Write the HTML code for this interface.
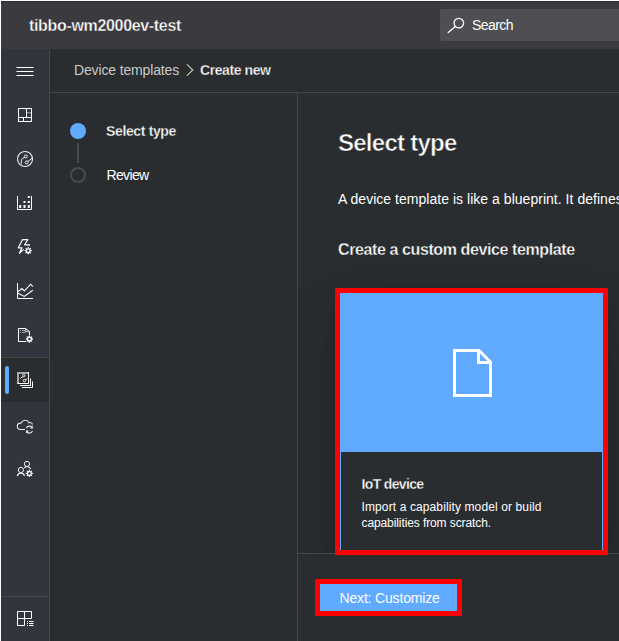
<!DOCTYPE html>
<html lang="en">
<head>
<meta charset="utf-8">
<title>Create new device template</title>
<style>
*{box-sizing:border-box;margin:0;padding:0}
html,body{width:619px;height:641px;overflow:hidden;background:#fff}
body{font-family:"Liberation Sans",sans-serif;color:#fff;position:relative}
.abs{position:absolute}
.t{position:absolute;white-space:nowrap}
#app{position:absolute;left:1px;top:1px;width:618px;height:640px;background:#2a2d30;overflow:hidden}
/* header */
#hdr{left:1px;top:1px;width:618px;height:48px;background:#3b3a3e;border-top:1px solid #2b2a2e}
#title{left:29px;top:16px;font-size:16px;line-height:20px;font-weight:bold;letter-spacing:-0.33px;-webkit-text-stroke:0.35px #3b3a3e}
#search{left:440px;top:9px;width:190px;height:32px;background:#4f4e53;border-radius:2px}
#searchtxt{left:472px;top:15px;font-size:14px;line-height:20px;letter-spacing:-0.56px}
/* sidebar */
#side{left:1px;top:49px;width:48px;height:592px;background:#31363e}
#sidesep{left:49px;top:49px;width:1px;height:592px;background:#474645}
.hl{position:absolute;left:1px;width:48px;height:1px;background:#484644}
#active{left:1px;top:358px;width:48px;height:44px;background:#2a2d30}
#pill{left:5px;top:366px;width:4px;height:28px;border-radius:2px;background:#60aaff}
svg{position:absolute;overflow:visible}
/* breadcrumb */
#crumbline{left:50px;top:92px;width:569px;height:1px;background:#474645}
#c1{left:74px;top:60px;font-size:14px;line-height:20px;color:#c9c9c9;letter-spacing:-0.149px}
#c2{left:200px;top:60px;font-size:14px;line-height:20px;font-weight:bold;letter-spacing:-0.42px;-webkit-text-stroke:0.3px #2a2d30}
/* steps */
#stepsep{left:297px;top:93px;width:1px;height:548px;background:#474645}
#dot1{left:70px;top:123px;width:16px;height:16px;border-radius:50%;background:#60aaff}
#conn{left:77px;top:143px;width:2px;height:20px;background:#4a4a4a}
#dot2{left:70px;top:167px;width:16px;height:16px;border-radius:50%;border:2px solid #4a4a4a}
#s1{left:106px;top:121px;font-size:14px;line-height:20px;font-weight:bold;letter-spacing:-0.358px;-webkit-text-stroke:0.3px #2a2d30}
#s2{left:106.5px;top:165px;font-size:14px;line-height:20px;letter-spacing:-0.651px}
/* main */
#h1{left:338px;top:127px;font-size:24px;line-height:32px;font-weight:bold;letter-spacing:-0.749px;-webkit-text-stroke:0.55px #2a2d30}
#p{left:338px;top:189px;font-size:14px;line-height:20px;letter-spacing:0.03px}
#h2{left:338px;top:240px;font-size:16px;line-height:20px;font-weight:bold;letter-spacing:-0.397px;-webkit-text-stroke:0.35px #2a2d30}
#cardshadow{left:42px;top:200px;width:263px;height:260px;box-shadow:0 25.6px 57.6px rgba(0,0,0,.22),0 4.8px 14.4px rgba(0,0,0,.18)}
#cardtop{left:340px;top:293px;width:263px;height:159px;background:#60aaff}
#cardbody{left:340px;top:452px;width:263px;height:101px;border-left:1px solid #60aaff;border-right:1px solid #60aaff;background:#2a2d30}
#ct{left:361.5px;top:474px;font-size:14px;line-height:20px;font-weight:bold;letter-spacing:-0.647px;-webkit-text-stroke:0.3px #2a2d30}
#cd1{left:361.5px;top:499px;font-size:12px;line-height:16px;letter-spacing:0.115px}
#cd2{left:361.5px;top:515px;font-size:12px;line-height:16px;letter-spacing:-0.1px}
#red1{left:335px;top:288px;width:273px;height:267px;border:5px solid #fe0000;border-radius:1px}
/* footer */
#footbg{left:298px;top:553px;width:321px;height:88px;background:#2a2d30}
#footline{left:298px;top:553px;width:321px;height:1px;background:#484644}
#btn{left:320px;top:582px;width:137px;height:32px;background:#60aaff}
#btntxt{left:339.5px;top:588px;font-size:14px;line-height:20px;letter-spacing:-0.17px;color:#fdfdff}
#red2{left:315px;top:579px;width:147px;height:37px;border:5px solid #fe0000;border-radius:1px}
</style>
</head>
<body>
<div id="app"></div>

<!-- header -->
<div id="hdr" class="abs"></div>
<div id="title" class="t">tibbo-wm2000ev-test</div>
<div id="search" class="abs"></div>
<svg style="left:446px;top:16px" width="20" height="19" viewBox="446 16 20 19" fill="none" stroke="#fff" stroke-width="1.3" stroke-linecap="round"><circle cx="458.8" cy="23.1" r="4.8"/><path d="M455.3 26.6L448.2 32.6"/></svg>
<div id="searchtxt" class="t">Search</div>

<!-- breadcrumb -->
<div id="c1" class="t">Device templates</div>
<svg style="left:185px;top:63px" width="12" height="16" viewBox="185 63 12 16" fill="none" stroke="#c9c9c9" stroke-width="1.1"><path d="M186.9 64.3L192.8 70L186.9 75.7"/></svg>
<div id="c2" class="t">Create new</div>
<div id="crumbline" class="abs"></div>

<!-- sidebar -->
<div id="side" class="abs"></div>
<div id="sidesep" class="abs"></div>
<div class="hl" style="top:357px"></div>
<div id="active" class="abs"></div>
<div id="pill" class="abs"></div>
<div class="hl" style="top:596px"></div>
<svg id="icons" style="left:0;top:0" width="60" height="641" viewBox="0 0 60 641" fill="none" stroke="#fff" stroke-width="1">
  <!-- hamburger -->
  <path d="M16.5 67.5H33.5M16.5 71.5H33.5M16.5 75.5H33.5" stroke-width="1"/>
  <!-- dashboard -->
  <g>
    <rect x="18.5" y="108.5" width="13" height="13"/>
    <path d="M26.5 108.5V117.5M18.5 117.5H31.5M23.5 117.5V121.5"/>
    <path d="M26.5 112.8H31.5" stroke-opacity=".6"/>
  </g>
  <!-- devices circle -->
  <g stroke="#f0f0f0">
    <circle cx="25" cy="159" r="7.5" stroke-width="1.1"/>
    <circle cx="25.8" cy="156.4" r="1.5"/>
    <circle cx="26.7" cy="162.4" r="1.5"/>
    <path d="M24.6 157.3L21.3 159.6V164.3M28 161.4L32 158.3"/>
  </g>
  <!-- device groups -->
  <g>
    <path d="M17.5 196V209.5H31.5V196"/>
    <g fill="#fff" stroke="none">
      <rect x="19.2" y="205" width="2" height="3"/>
      <rect x="23.5" y="205" width="2" height="3"/>
      <rect x="27.8" y="205" width="2" height="3"/>
      <rect x="23.5" y="201" width="2" height="2"/>
      <rect x="27.8" y="201" width="2" height="2"/>
      <rect x="27.8" y="196" width="2" height="2"/>
    </g>
  </g>
  <!-- rules (bolt + gear) -->
  <g stroke="#fff">
    <path d="M23.7 249.4L19.3 253.2L22 247.8H18.3L22.5 239.6H27.8L24.6 244.8H29.5L28.9 245.9" stroke-width="1.15" stroke-linejoin="round"/>
    <g transform="translate(28.2 250.7)">
      <circle r="1.9" stroke-width="1.3"/>
      <path d="M0 -3.6V-2.2M0 3.6V2.2M-3.6 0H-2.2M3.6 0H2.2M-2.55 -2.55L-1.6 -1.6M2.55 2.55L1.6 1.6M-2.55 2.55L-1.6 1.6M2.55 -2.55L1.6 -1.6" stroke-width="1.2"/>
    </g>
  </g>
  <!-- analytics -->
  <g>
    <path d="M17.5 283V298.5H33"/>
    <path d="M18 291.8L21.9 288.6L24.3 291L30.6 284.2L32.8 286.7M18 293.2L24.3 296.4L32.8 290.3" stroke-width="1.1"/>
  </g>
  <!-- jobs (doc + gear) -->
  <g>
    <path d="M29.5 335V331.6L25.6 328.5H18.5V341.5H26"/>
    <path d="M25.5 328.5V331.7H29.5" stroke-width=".9" stroke-opacity=".85"/>
    <path d="M20 330.5H21M22 330.5H25M20 332.5H21M22 332.5H25" stroke-opacity=".55"/>
    <g transform="translate(29.4 339.1)">
      <circle r="1.9" stroke-width="1.3"/>
      <path d="M0 -3.6V-2.2M0 3.6V2.2M-3.6 0H-2.2M3.6 0H2.2M-2.55 -2.55L-1.6 -1.6M2.55 2.55L1.6 1.6M-2.55 2.55L-1.6 1.6M2.55 -2.55L1.6 -1.6" stroke-width="1.2"/>
    </g>
  </g>
  <!-- device templates (active) -->
  <g>
    <rect x="17" y="372" width="12" height="12" fill="#a8a8a8" stroke="none"/>
    <rect x="19" y="374" width="9" height="9" fill="#2a2d30" stroke="none"/>
    <path d="M28.5 372V383.5H17.5" />
    <path d="M30.5 378.5V385.5H20M32.5 381.5V387.5H22"/>
    <circle cx="23.7" cy="375.7" r="1.2" stroke-width=".95"/>
    <circle cx="24.4" cy="380.6" r="1.2" stroke-width=".95"/>
    <path d="M22.7 376.6L20.3 378.5M25.4 379.8L27.4 378.6" stroke-width=".95"/>
  </g>
  <!-- data export (cloud + sync) -->
  <g stroke="#ececec">
    <path d="M25 429.5H20.5A3.2 3.2 0 0 1 20.5 423.1L21.6 422.6A4.05 4.05 0 0 1 29 422.8A2.6 2.6 0 0 1 32.5 424.5" stroke-width="1.05"/>
    <path d="M26.4 428.3A3.2 3.2 0 0 1 31.8 427.2M32.4 430.9A3.2 3.2 0 0 1 27 432" stroke-width="1.2"/>
    <path d="M32.8 425.6V428.6H29.8ZM26 433.4V430.4H29Z" fill="#ececec" stroke="none"/>
  </g>
  <!-- administration (people + gear) -->
  <g stroke="#f0f0f0">
    <circle cx="27" cy="463.9" r="2.6"/>
    <path d="M24 467.9A4.2 4.2 0 0 1 30.7 469" stroke-width="1.1"/>
    <circle cx="20.9" cy="470" r="2.6"/>
    <path d="M17.3 476A3.7 3.7 0 0 1 24.5 476" stroke-width="1.1"/>
    <g transform="translate(29.4 473.4)">
      <circle r="1.9" stroke-width="1.3"/>
      <path d="M0 -3.6V-2.2M0 3.6V2.2M-3.6 0H-2.2M3.6 0H2.2M-2.55 -2.55L-1.6 -1.6M2.55 2.55L1.6 1.6M-2.55 2.55L-1.6 1.6M2.55 -2.55L1.6 -1.6" stroke-width="1.2"/>
    </g>
  </g>
  <!-- my apps -->
  <g>
    <path d="M17.5 611.5H31.5V618.5H24.5V625.5H17.5ZM24.5 611.5V618.5M17.5 618.5H24.5"/>
    <path d="M27 621.5H28M29 621.5H33.5M27 623.5H28M29 623.5H33.5M27 625.5H28M29 625.5H33.5"/>
  </g>
</svg>

<!-- steps -->
<div id="stepsep" class="abs"></div>
<div id="dot1" class="abs"></div>
<div id="conn" class="abs"></div>
<div id="dot2" class="abs"></div>
<div id="s1" class="t">Select type</div>
<div id="s2" class="t">Review</div>

<!-- main -->
<div id="h1" class="t">Select type</div>
<div id="p" class="t">A device template is like a blueprint. It defines the capabilities of a device.</div>
<div id="h2" class="t">Create a custom device template</div>
<div class="abs" style="left:298px;top:93px;width:321px;height:460px;overflow:hidden"><div id="cardshadow" class="abs"></div></div>
<div id="cardtop" class="abs"></div>
<div id="cardbody" class="abs"></div>
<svg style="left:450px;top:346px" width="46" height="54" viewBox="450 346 46 54" fill="none" stroke="#fff" stroke-width="3"><path d="M454.5 350.5H479L490.5 362V395.5H454.5Z"/><path d="M478.5 350.5V362.5H490.5"/></svg>
<div id="ct" class="t">IoT device</div>
<div id="cd1" class="t">Import a capability model or build</div>
<div id="cd2" class="t">capabilities from scratch.</div>

<!-- footer -->
<div id="footbg" class="abs"></div>
<div id="footline" class="abs"></div>
<div id="red1" class="abs"></div>
<div id="btn" class="abs"></div>
<div id="btntxt" class="t">Next: Customize</div>
<div id="red2" class="abs"></div>
</body>
</html>
